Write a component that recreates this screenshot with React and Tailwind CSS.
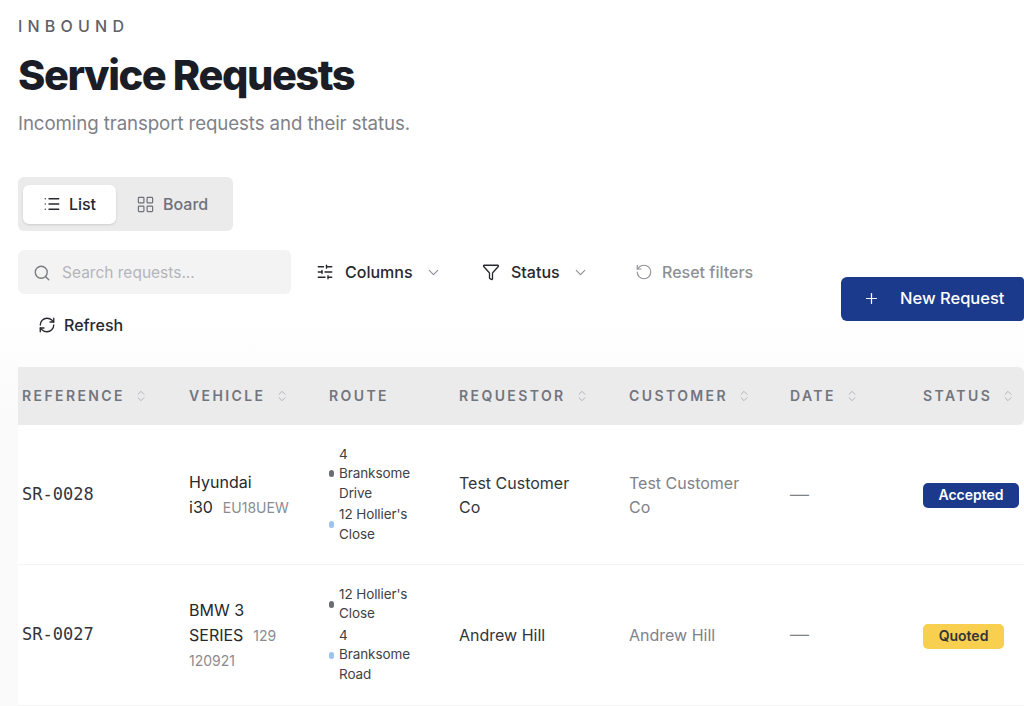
import React from "react";
import {
    ChevronDown,
    ChevronsUpDown,
    Funnel,
    LayoutGrid,
    List,
    Plus,
    RefreshCw,
    RotateCcw,
    Search,
    SlidersHorizontal,
} from "lucide-react";

const SANS = { fontFamily: "Inter, 'Noto Sans', sans-serif" };

const cols = [
    { label: "REFERENCE", sort: true, w: "w-[167px]" },
    { label: "VEHICLE", sort: true, w: "w-[140px]" },
    { label: "ROUTE", sort: false, w: "w-[130px]" },
    { label: "REQUESTOR", sort: true, w: "w-[170px]" },
    { label: "CUSTOMER", sort: true, w: "w-[161px]" },
    { label: "DATE", sort: true, w: "w-[133px]" },
    { label: "STATUS", sort: true, w: "w-[105px] rounded-r-md" },
];

const Stop = ({ dot, lines }) => (
    <div className="flex items-center gap-[5px]">
        <span className={`w-[5px] h-[7px] rounded-full shrink-0 ${dot}`} />
        <div>
            {lines.map((l) => (
                <div key={l}>{l}</div>
            ))}
        </div>
    </div>
);

const Route = ({ from, to }) => (
    <div className="flex flex-col gap-[2px] text-[13.5px] leading-[19.5px] tracking-[-0.1px] text-[#3f4148]">
        <Stop dot="bg-[#6b6d75]" lines={from} />
        <Stop dot="bg-[#9cc3ea]" lines={to} />
    </div>
);

const Plate = ({ children }) => (
    <span className="text-[14px] text-[#8a8c93]">{children}</span>
);

const Row = ({ id, vehicle, route, requestor, customer, badge, tall }) => (
    <tr className="border-b border-[#f4f4f5] bg-white">
        <td className={`pl-1 align-middle ${tall ? "h-[141px]" : "h-[139px]"}`}>
            <span className="font-['DejaVu_Sans_Mono'] text-[17px] text-[#33353b]">
                {id}
            </span>
        </td>
        <td className="pl-1 pr-4 pt-[2px] align-middle text-[16px] leading-[24.5px] text-[#26282e]">
            {vehicle}
        </td>
        <td className="pl-1 pr-2 align-middle">{route}</td>
        <td className="pl-1 pr-10 pt-[2px] align-middle text-[16px] leading-[24.5px] text-[#33353b]">
            {requestor}
        </td>
        <td className="pl-1 pr-10 pt-[2px] align-middle text-[16px] leading-[24.5px] text-[#808289]">
            {customer}
        </td>
        <td className="pl-1 pt-[2px] align-middle text-[19px] font-light text-[#808289]">—</td>
        <td className="pl-1 pt-[2px] align-middle">{badge}</td>
    </tr>
);

const App = () => {
    return (
        <div
            style={SANS}
            className="h-[706px] overflow-hidden pl-[18px] pt-[16px] bg-gradient-to-b from-white from-[45%] to-[#fafafa] to-[58%]"
        >
            <div className="text-[16px] leading-5 font-medium tracking-[5.2px] text-[#5f616a]">
                INBOUND
            </div>
            <h1 className="mt-[14px] text-[41.5px] leading-[50px] font-extrabold tracking-[-1.44px] text-[#1b1d26]">
                Service Requests
            </h1>
            <p className="mt-[10px] text-[18.7px] leading-7 tracking-[-0.1px] text-[#7f8188]">
                Incoming transport requests and their status.
            </p>

            <div className="mt-[39px] w-[215px] h-[54px] p-[7px] px-[5px] flex items-center rounded-md bg-[#ebebec]">
                <div className="w-[93px] h-[39px] flex items-center justify-center gap-2 rounded-md bg-white shadow-sm text-[16px] font-medium text-[#26282e]">
                    <List size={18} strokeWidth={1.75} />
                    List
                </div>
                <div className="flex items-center gap-2 ml-[20px] text-[16px] font-medium text-[#6f7178]">
                    <LayoutGrid size={19} strokeWidth={1.5} />
                    Board
                </div>
            </div>

            <div className="mt-[19px] flex items-center justify-between">
                <div className="w-[800px] flex flex-wrap items-center gap-y-[9px]">
                    <div className="w-[273px] h-[44px] pt-[1px] flex items-center gap-[11px] pl-[15px] rounded-md bg-[#f3f3f4] text-[15.5px] text-[#b4b5ba]">
                        <Search size={18} strokeWidth={1.75} className="text-[#77797f]" />
                        Search requests...
                    </div>
                    <div className="ml-[25px] w-[166px] h-[44px] flex items-center text-[16px] font-medium text-[#26282e]">
                        <SlidersHorizontal size={18} strokeWidth={1.75} className="mr-[11px]" />
                        Columns
                        <ChevronDown size={17} strokeWidth={1.5} className="ml-[12px] text-[#8a8c93]" />
                    </div>
                    <div className="w-[153px] h-[44px] flex items-center text-[16px] font-medium text-[#26282e]">
                        <Funnel size={18} strokeWidth={1.75} className="mr-[11px]" />
                        Status
                        <ChevronDown size={17} strokeWidth={1.5} className="ml-[12px] text-[#8a8c93]" />
                    </div>
                    <div className="h-[44px] flex items-center gap-[9px] text-[16px] font-medium text-[#8e9096]">
                        <RotateCcw size={18} strokeWidth={1.5} />
                        Reset filters
                    </div>
                    <div className="w-full h-[44px] pl-[20px] flex items-center gap-[8px] text-[16px] font-medium text-[#26282e]">
                        <RefreshCw size={18} strokeWidth={1.75} />
                        Refresh
                    </div>
                </div>
                <div className="w-[183px] h-[44px] flex items-center pl-[22px] gap-[20px] rounded-l-md rounded-r-sm bg-[#1c3a8c] text-[16.5px] font-medium text-white">
                    <Plus size={17} strokeWidth={1.75} />
                    New Request
                </div>
            </div>

            <table className="mt-[20px] w-[1006px] table-fixed border-collapse">
                <thead>
                    <tr className="bg-[#ebebec]">
                        {cols.map((c) => (
                            <th
                                key={c.label}
                                className={`${c.w} h-[58px] pl-1 pb-[1px] text-left align-middle text-[14px] font-semibold tracking-[2.4px] text-[#73757c]`}
                            >
                                <span className="flex items-center gap-[9px]">
                                    {c.label}
                                    {c.sort && (
                                        <ChevronsUpDown size={14} strokeWidth={1.5} className="text-[#a8aaaf]" />
                                    )}
                                </span>
                            </th>
                        ))}
                    </tr>
                </thead>
                <tbody>
                    <Row
                        id="SR-0028"
                        vehicle={
                            <>
                                <div>Hyundai</div>
                                <div className="flex items-baseline gap-[10px]">
                                    <span>i30</span>
                                    <Plate>EU18UEW</Plate>
                                </div>
                            </>
                        }
                        route={
                            <Route
                                from={["4", "Branksome", "Drive"]}
                                to={["12 Hollier's", "Close"]}
                            />
                        }
                        requestor="Test Customer Co"
                        customer="Test Customer Co"
                        badge={
                            <span className="inline-block w-[96px] h-[25px] leading-[24px] text-center rounded-[5px] bg-[#1c3a8c] text-[14px] font-semibold text-white">
                                Accepted
                            </span>
                        }
                    />
                    <Row
                        tall
                        id="SR-0027"
                        vehicle={
                            <>
                                <div>BMW 3</div>
                                <div className="flex items-baseline gap-[10px]">
                                    <span>SERIES</span>
                                    <Plate>129</Plate>
                                </div>
                                <div className="leading-[24px]">
                                    <Plate>120921</Plate>
                                </div>
                            </>
                        }
                        route={
                            <Route
                                from={["12 Hollier's", "Close"]}
                                to={["4", "Branksome", "Road"]}
                            />
                        }
                        requestor="Andrew Hill"
                        customer="Andrew Hill"
                        badge={
                            <span className="inline-block w-[81px] h-[25px] leading-[24px] text-center rounded-[5px] bg-[#f8cf4e] text-[14px] font-semibold text-[#33353b]">
                                Quoted
                            </span>
                        }
                    />
                </tbody>
            </table>
        </div>
    );
};

export default App;
